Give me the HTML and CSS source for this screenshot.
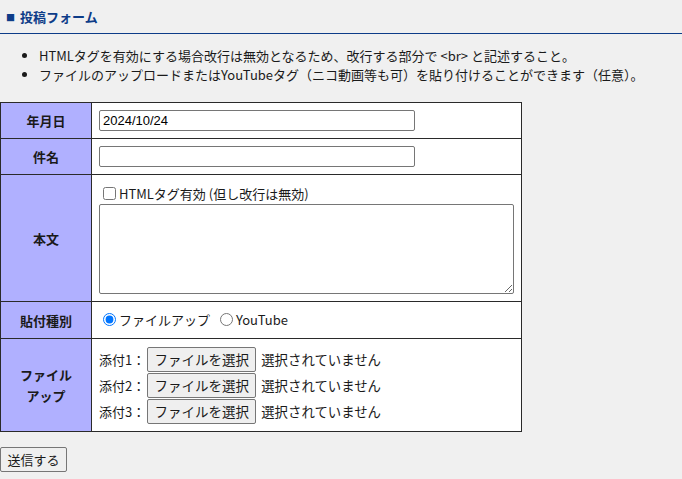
FILE: index.html
```html
<!DOCTYPE html>
<html lang="ja">
<head>
<meta charset="utf-8">
<title>投稿フォーム</title>
<link rel="stylesheet" href="styles.css">
</head>
<body>
<h2 class="title"><span class="sq">■</span>投稿フォーム</h2>
<ul class="notes">
  <li>HTMLタグを有効にする場合改行は無効となるため、改行する部分で &lt;br&gt; と記述すること。</li>
  <li>ファイルのアップロードまたはYouTubeタグ（ニコ動画等も可）を貼り付けることができます（任意）。</li>
</ul>
<form class="form">
<table class="tbl">
  <tr>
    <th>年月日</th>
    <td><input class="txt" type="text" value="2024/10/24"></td>
  </tr>
  <tr>
    <th>件名</th>
    <td><input class="txt" type="text" value=""></td>
  </tr>
  <tr>
    <th>本文</th>
    <td>
      <label class="chk"><input type="checkbox">HTMLタグ有効 (但し改行は無効)</label>
      <textarea class="area"></textarea>
    </td>
  </tr>
  <tr class="r4">
    <th>貼付種別</th>
    <td>
      <label class="rad"><input type="radio" name="t" checked>ファイルアップ</label>
      <label class="rad"><input type="radio" name="t">YouTube</label>
    </td>
  </tr>
  <tr>
    <th>ファイル<br>アップ</th>
    <td class="files">
      <div class="frow">添付1：<button type="button" class="fbtn">ファイルを選択</button><span>選択されていません</span></div>
      <div class="frow">添付2：<button type="button" class="fbtn">ファイルを選択</button><span>選択されていません</span></div>
      <div class="frow">添付3：<button type="button" class="fbtn">ファイルを選択</button><span>選択されていません</span></div>
    </td>
  </tr>
</table>
<button type="button" class="submit">送信する</button>
</form>
</body>
</html>
```
FILE: styles.css
```css
html, body {
  margin: 0;
  padding: 0;
  background: #f0f0f0;
  color: #1a1a1a;
  font-family: "Noto Sans CJK JP", sans-serif;
  font-size: 13px;
}
.title {
  margin: 0;
  padding: 8px 6px 6px;
  font-size: 13px;
  line-height: 17px;
  font-weight: bold;
  color: #0d3c88;
  border-bottom: 1px solid #0d3c88;
}
.sq {
  font-size: 9px;
  margin-right: 5px;
  position: relative;
  top: -1px;
}
.notes {
  margin: 12px 0 18px;
  padding-left: 39px;
  line-height: 19px;
}
.form { margin: 0; }
.tbl {
  border-collapse: collapse;
  background: #fff;
  width: 522px;
}
.tbl th, .tbl td {
  border: 1px solid #2a2a2a;
  padding: 7px 7px;
  font-size: 13px;
  line-height: 21px;
}
.tbl th {
  width: 76px;
  background: #b0b0ff;
  font-weight: bold;
  text-align: center;
}
.txt {
  box-sizing: border-box;
  width: 316px;
  height: 21px;
  margin: 0;
  padding: 1px 3px;
  border: 1px solid #767676;
  border-radius: 2px;
  font-family: "Liberation Sans", sans-serif;
  font-size: 13px;
  background: #fff;
  display: block;
}
.chk {
  display: flex;
  align-items: center;
  height: 21px;
  margin-top: 1px;
}
.chk input {
  margin: 0 3px 0 4px;
  width: 13px;
  height: 13px;
}
.area {
  display: block;
  box-sizing: border-box;
  width: 415px;
  height: 90px;
  margin: 0;
  border: 1px solid #767676;
  border-radius: 2px;
  background: #fff;
}
.r4 td { padding-top: 7px; padding-bottom: 7px; }
.rad {
  display: inline-flex;
  align-items: center;
  margin-right: 3px;
}
.rad input {
  margin: 0 3px 0 4px;
  width: 13px;
  height: 13px;
  accent-color: #0075ff;
}
.files { padding-top: 7px; padding-bottom: 7px; }
.frow {
  display: flex;
  align-items: center;
  height: 26px;
}
.fbtn {
  box-sizing: border-box;
  height: 25px;
  width: 109px;
  margin: 0 5px 0 2px;
  padding: 0 4px;
  font-family: "Noto Sans CJK JP", sans-serif;
  font-size: 13.5px;
  color: #1a1a1a;
  background: #efefef;
  border: 1px solid #767676;
  border-radius: 2px;
}
.frow span { font-size: 13.4px; }
.submit {
  box-sizing: border-box;
  display: block;
  margin: 15px 0 0;
  height: 25px;
  width: 67px;
  padding: 0;
  font-family: "Noto Sans CJK JP", sans-serif;
  font-size: 13px;
  color: #1a1a1a;
  background: #efefef;
  border: 1px solid #767676;
  border-radius: 2px;
}
```
